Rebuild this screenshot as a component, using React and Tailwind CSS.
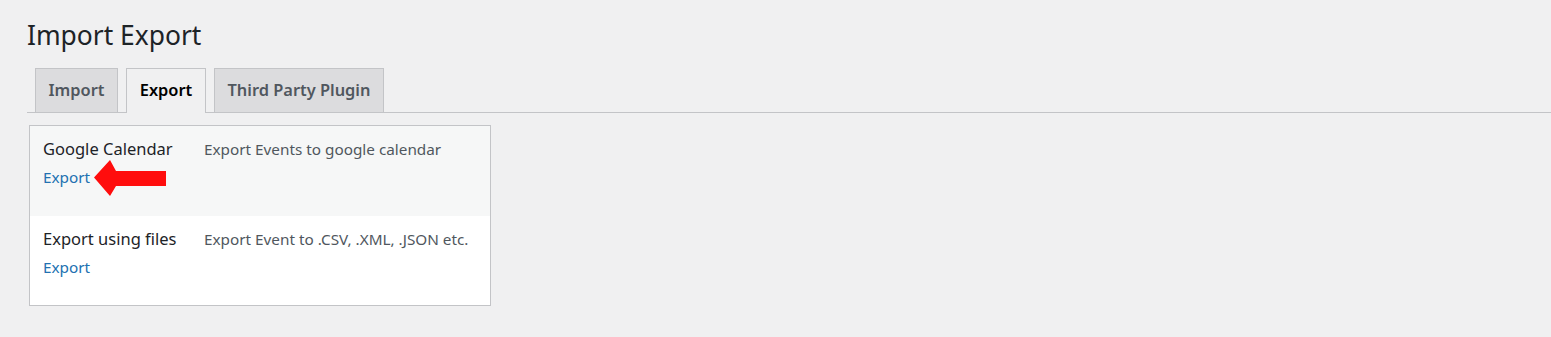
import React from "react";

const font = { fontFamily: '"Noto Sans", "Open Sans", sans-serif' };

const Tab = ({ label, active, width }) => (
  <div
    className={
      active
        ? "flex h-[45px] items-center justify-center border border-b-0 border-[#c3c4c7] bg-[#f0f0f1] text-[16.4px] font-semibold text-black mb-[-1px]"
        : "flex h-[44px] items-center justify-center border border-b-0 border-[#c3c4c7] bg-[#dcdcde] text-[16.4px] font-semibold text-[#50575e]"
    }
    style={{ width }}
  >
    <span className={active ? "mb-[1px]" : ""}>{label}</span>
  </div>
);

const Row = ({ title, desc, shaded, arrow }) => (
  <div className={shaded ? "flex h-[90px] bg-[#f6f7f7] pl-[13px] pt-[10px]" : "flex h-[89px] bg-white pl-[13px] pt-[10px]"}>
    <div className="w-[161px]">
      <div className="text-[16.5px] leading-[26px] text-[#1d2327]">{title}</div>
      <div className="mt-[3px] flex h-[24px] items-center">
        <a className="text-[15.3px] leading-[24px] text-[#2271b1]">Export</a>
        {arrow && (
          <svg width="74" height="37" viewBox="0 0 74 37" className="-my-[7px] ml-[4px] mt-[-5px]">
            <polygon
              points="0,17.5 16,0 22,11 72,11 72,26 22,26 16,36"
              fill="#ff0d0d"
            />
          </svg>
        )}
      </div>
    </div>
    <div className="pt-[1px] text-[15.3px] leading-[24px] text-[#50575e]">{desc}</div>
  </div>
);

export default function App() {
  return (
    <div className="min-h-screen bg-[#f0f0f1] pl-[27px] pt-[17px]" style={font}>
      <h1 className="text-[26.4px] leading-[36px] font-normal text-[#1d2327]">Import Export</h1>
      <div className="mt-[15px] flex items-end gap-[8px] border-b border-[#c3c4c7] pl-[8px]">
        <Tab label="Import" width={83} />
        <Tab label="Export" width={80} active />
        <Tab label="Third Party Plugin" width={170} />
      </div>
      <div className="ml-[2px] mt-[12px] w-[462px] border border-[#c3c4c7] bg-white">
        <Row title="Google Calendar" desc="Export Events to google calendar" shaded arrow />
        <Row title="Export using files" desc="Export Event to .CSV, .XML, .JSON etc." />
      </div>
    </div>
  );
}
